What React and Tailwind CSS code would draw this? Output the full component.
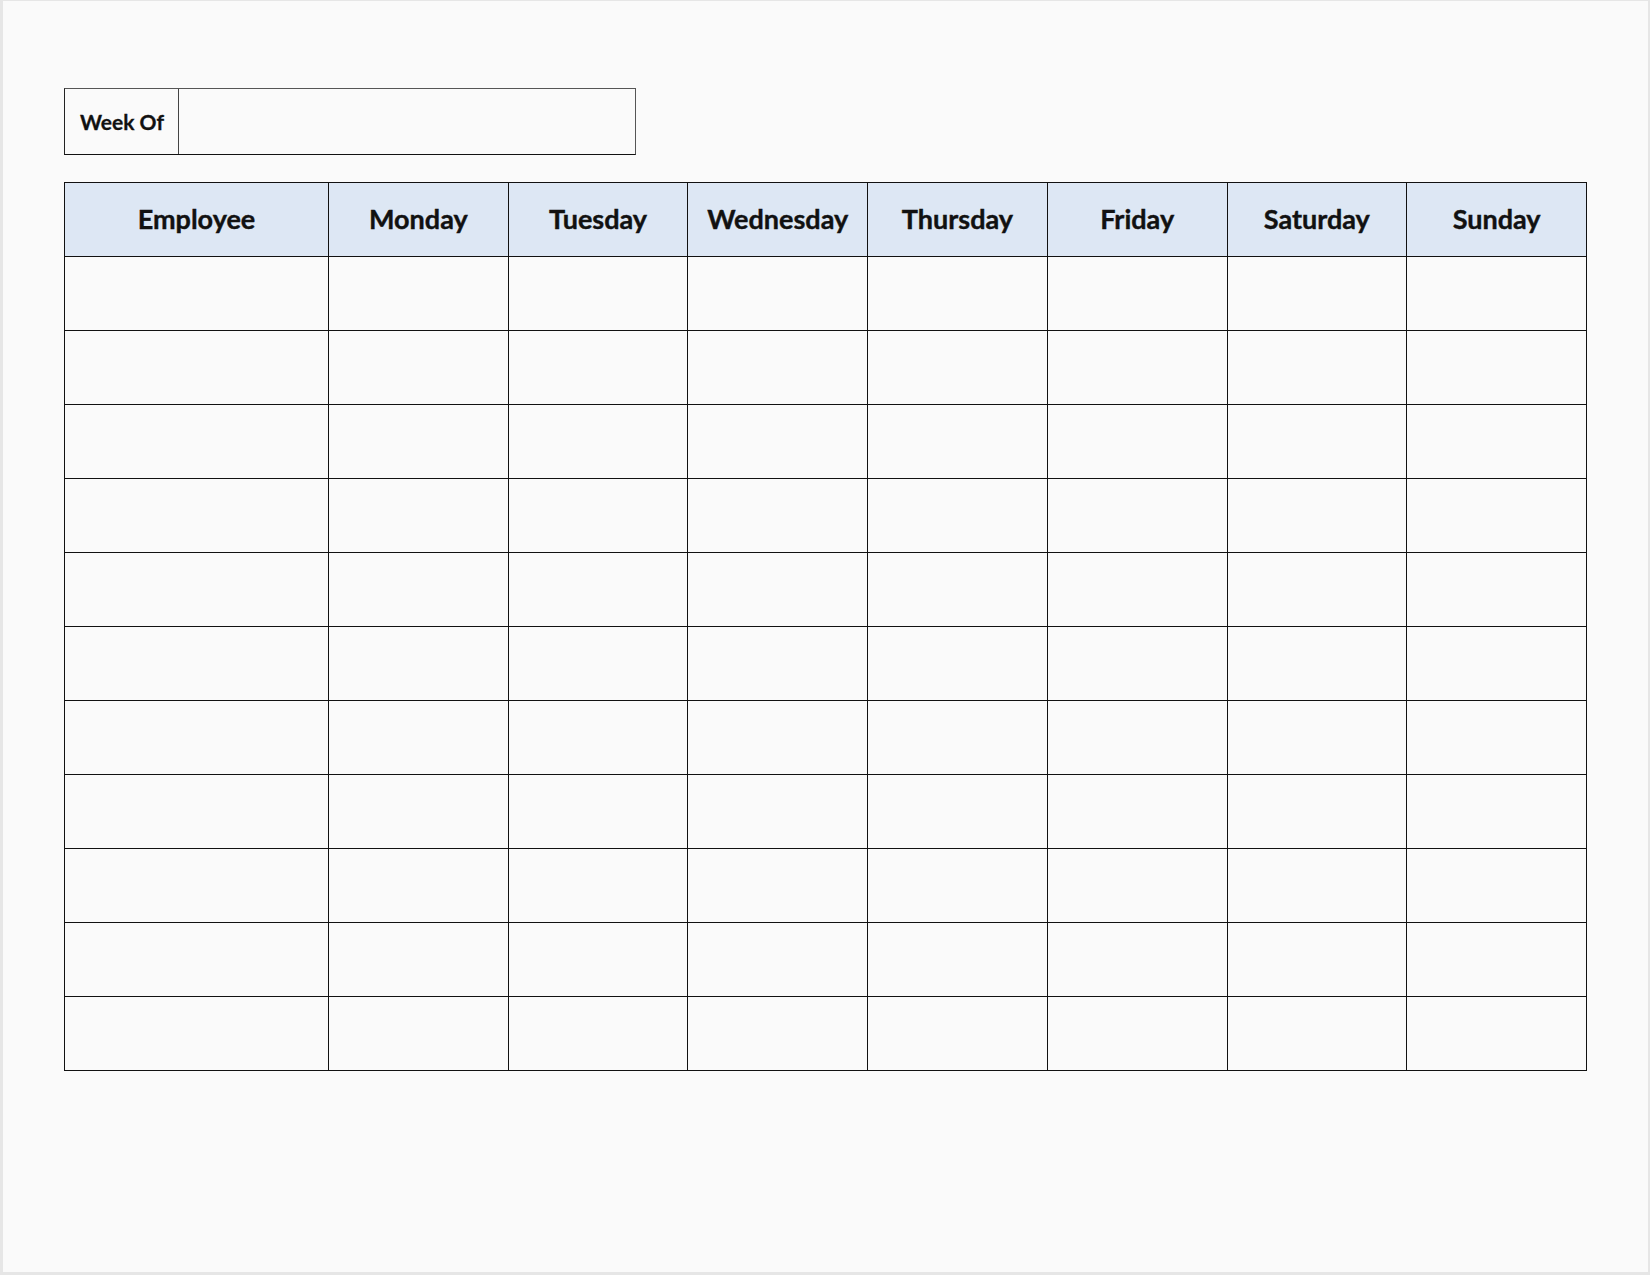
import React from "react";

const days = ["Monday", "Tuesday", "Wednesday", "Thursday", "Friday", "Saturday", "Sunday"];

const App = () => {
    const rows = Array.from({ length: 11 });

    return (
        <div
            className="w-[1650px] h-[1275px] bg-[#fafafa] border-l-[3px] border-b-[3px] border-r-[2px] border-t border-[#e6e6e6] pt-[87px] pl-[61px]"
            style={{ fontFamily: "Lato, 'Open Sans', sans-serif" }}
        >
            {/* Week Of box */}
            <div className="flex w-[572px] h-[67px] border border-[#555] border-b-[#111] border-l-[#222]">
                <div className="w-[114px] border-r border-[#444] flex items-center pl-[15px] text-[21px] font-bold text-[#111] [-webkit-text-stroke:0.3px_#111]">
                    Week Of
                </div>
                <div className="flex-1" />
            </div>

            {/* Schedule table */}
            <table className="mt-[27px] w-[1523px] table-fixed border-collapse">
                <colgroup>
                    <col className="w-[264px]" />
                    {days.map((d) => (
                        <col key={d} />
                    ))}
                </colgroup>
                <thead>
                    <tr className="h-[74px] bg-[#dde7f4]">
                        <th className="border border-[#111] text-[27px] font-bold text-[#111] text-center align-middle [-webkit-text-stroke:0.4px_#111]">
                            Employee
                        </th>
                        {days.map((d) => (
                            <th
                                key={d}
                                className="border border-[#111] text-[27px] font-bold text-[#111] text-center align-middle [-webkit-text-stroke:0.4px_#111]"
                            >
                                {d}
                            </th>
                        ))}
                    </tr>
                </thead>
                <tbody>
                    {rows.map((_, i) => (
                        <tr key={i} className="h-[74px]">
                            <td className="border border-[#111]" />
                            {days.map((d) => (
                                <td key={d} className="border border-[#111]" />
                            ))}
                        </tr>
                    ))}
                </tbody>
            </table>
        </div>
    );
};

export default App;
